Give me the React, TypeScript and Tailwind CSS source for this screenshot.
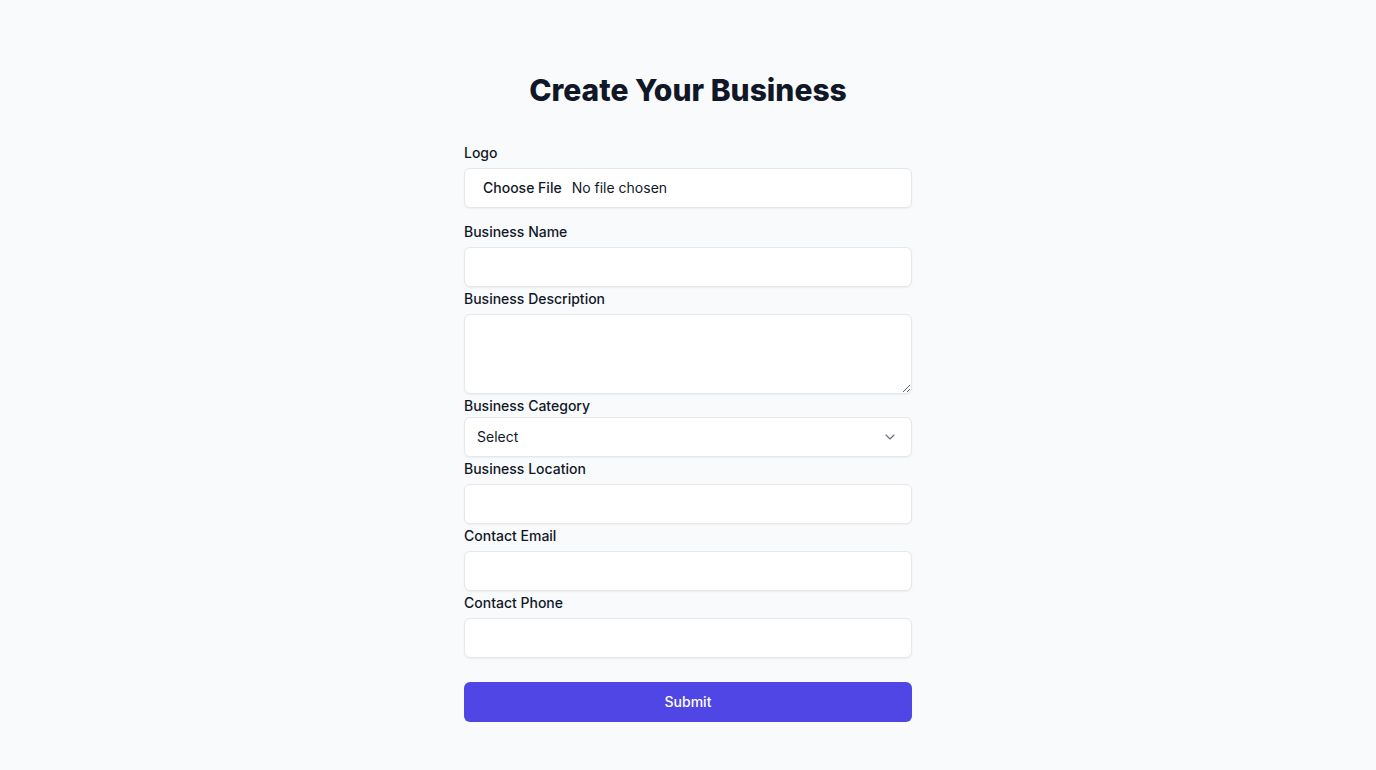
import { ChevronDown } from 'lucide-react';

const fieldClass =
    'block w-full h-10 rounded-md border border-gray-200 bg-white px-3 text-sm text-gray-900 shadow-xs outline-none';

function Field({ label, children, gap = 'mt-[5px]' }: { label: string; children: React.ReactNode; gap?: string }) {
    return (
        <div>
            <label className="block pt-px text-sm font-medium leading-5 text-gray-900">{label}</label>
            <div className={gap}>{children}</div>
        </div>
    );
}

export default function App() {
    return (
        <div className="min-h-screen bg-gray-50 pt-[72px] font-['Inter',sans-serif]">
            <h1 className="text-center text-3xl font-extrabold leading-9 text-gray-900">Create Your Business</h1>
            <form className="mx-auto mt-[34px] flex w-[448px] flex-col gap-px">
                <div className="mb-3">
                    <Field label="Logo" gap="mt-[5px]">
                        <div className={`${fieldClass} flex items-center pl-[18px]`}>
                            <span className="font-medium">Choose File</span>
                            <span className="ml-[10px]">No file chosen</span>
                        </div>
                    </Field>
                </div>
                <Field label="Business Name">
                    <input type="text" className={fieldClass} />
                </Field>
                <Field label="Business Description">
                    <textarea className="block h-20 w-full rounded-md border border-gray-200 bg-white px-3 py-2 text-sm shadow-xs outline-none" />
                </Field>
                <Field label="Business Category" gap="mt-px">
                    <div className={`${fieldClass} flex items-center justify-between pr-[13px]`}>
                        <span>Select</span>
                        <ChevronDown size={16} strokeWidth={1.75} className="text-gray-500" />
                    </div>
                </Field>
                <Field label="Business Location">
                    <input type="text" className={fieldClass} />
                </Field>
                <Field label="Contact Email">
                    <input type="email" className={fieldClass} />
                </Field>
                <Field label="Contact Phone">
                    <input type="tel" className={fieldClass} />
                </Field>
                <button
                    type="button"
                    className="mt-[23px] h-10 w-full rounded-md bg-[#4f46e5] text-sm font-medium text-white"
                >
                    Submit
                </button>
            </form>
        </div>
    );
}
